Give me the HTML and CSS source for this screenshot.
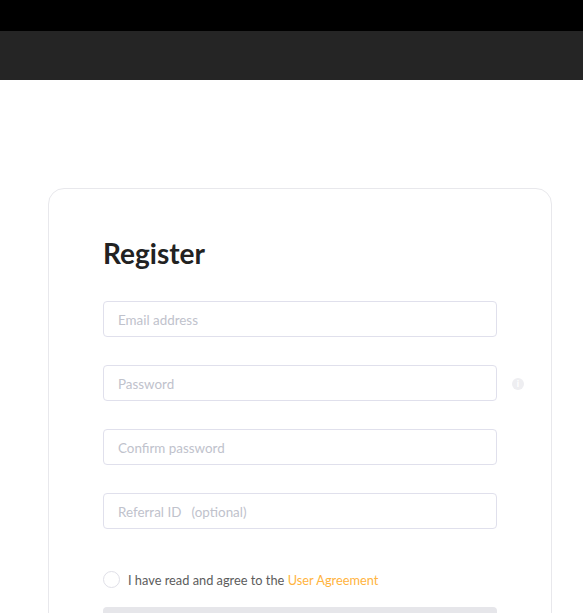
FILE: index.html

```html
<!DOCTYPE html>
<html lang="en">
<head>
    <meta charset="UTF-8">
    <meta name="viewport" content="width=device-width, initial-scale=1.0">
    <title>Register</title>
    <link rel="stylesheet" href="styles.css">
</head>
<body>

    <div class="top-strip"></div>
    <div class="header"></div>

    <div class="container">
        <h2>Register</h2>

        <div class="field">
            <input type="email" placeholder="Email address">
        </div>
        <div class="field">
            <input type="password" placeholder="Password">
            <span class="info-icon">i</span>
        </div>
        <div class="field">
            <input type="password" placeholder="Confirm password">
        </div>
        <div class="field">
            <input type="text" placeholder="Referral ID &nbsp;&nbsp;(optional)">
        </div>

        <div class="agree">
            <span class="radio"></span>
            <p>I have read and agree to the <a href="#">User Agreement</a></p>
        </div>

        <button type="button"></button>
    </div>

</body>
</html>
```

FILE: styles.css

```css
html, body {
    height: 613px;
    overflow: hidden;
}
body {
    margin: 0;
    background: white;
    font-family: 'Lato', sans-serif;
}
.top-strip {
    height: 31px;
    background: #000;
}
.header {
    height: 49px;
    background: #252525;
}
.container {
    box-sizing: border-box;
    width: 504px;
    height: 600px;
    margin: 108px 0 0 48px;
    padding: 45px 54px 0;
    border: 1px solid #e8e8ec;
    border-radius: 16px;
}
h2 {
    margin: 0 0 29px;
    height: 38px;
    line-height: 38px;
    font-size: 28px;
    font-weight: 700;
    color: #222;
}
.field {
    display: flex;
    align-items: center;
    gap: 15px;
    margin-bottom: 28px;
}
input {
    box-sizing: border-box;
    flex: none;
    width: 394px;
    height: 36px;
    padding: 1px 14px 0;
    border: 1px solid #e0e0ec;
    border-radius: 4px;
    font-family: 'Lato', sans-serif;
    font-size: 13.4px;
    outline: none;
}
input::placeholder {
    color: #c0c2cc;
    opacity: 1;
}
.info-icon {
    flex: none;
    width: 12px;
    height: 12px;
    margin-top: 2px;
    border-radius: 50%;
    background: #eeeef1;
    color: #fff;
    font-size: 9px;
    font-weight: 700;
    line-height: 12px;
    text-align: center;
}
.agree {
    display: flex;
    align-items: center;
    gap: 8px;
    margin-top: 42px;
    height: 17px;
}
.radio {
    box-sizing: border-box;
    width: 17px;
    height: 17px;
    border: 1px solid #e0e0e8;
    border-radius: 50%;
}
.agree p {
    margin: 0;
    font-size: 12.8px;
    color: #5c5c5c;
}
.agree a {
    color: #ffb440;
    text-decoration: none;
}
button {
    display: block;
    width: 394px;
    height: 40px;
    margin-top: 19px;
    background: #e6e6ea;
    border: none;
    border-radius: 4px;
}
```
